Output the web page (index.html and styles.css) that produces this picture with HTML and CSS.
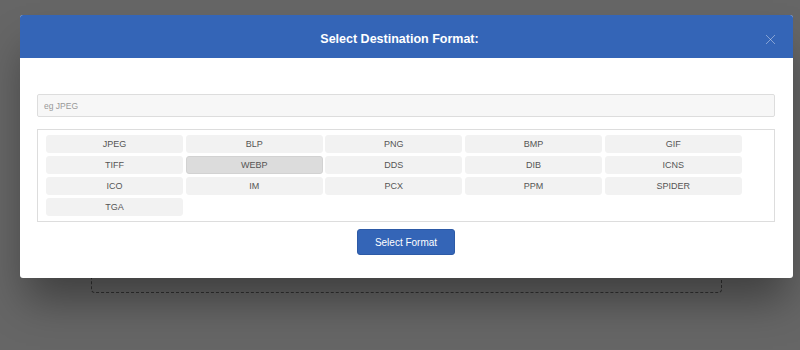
FILE: index.html
```html
<!DOCTYPE html>
<html lang="en">
<head>
    <meta charset="UTF-8">
    <title>Select Destination Format</title>
    <link rel="stylesheet" href="styles.css">
</head>
<body>
<div class="page">
    <div class="dropZone"></div>
</div>

<div class="modal">
    <header class="modalHead">
        <span class="modalTitle">Select Destination Format:</span>
        <button class="btnClose" title="Close">
            <svg width="11" height="11" viewBox="0 0 11 11"><path d="M1 1L10 10M10 1L1 10" stroke="currentColor" stroke-width="1" fill="none"/></svg>
        </button>
    </header>
    <div class="modalBody">
        <input type="text" id="formatSearch" placeholder="eg JPEG">
        <div class="formatList">
            <button class="fmt">JPEG</button>
            <button class="fmt">BLP</button>
            <button class="fmt">PNG</button>
            <button class="fmt">BMP</button>
            <button class="fmt">GIF</button>
            <button class="fmt">TIFF</button>
            <button class="fmt active">WEBP</button>
            <button class="fmt">DDS</button>
            <button class="fmt">DIB</button>
            <button class="fmt">ICNS</button>
            <button class="fmt">ICO</button>
            <button class="fmt">IM</button>
            <button class="fmt">PCX</button>
            <button class="fmt">PPM</button>
            <button class="fmt">SPIDER</button>
            <button class="fmt">TGA</button>
        </div>
        <div class="modalFoot">
            <button id="btnSelect">Select Format</button>
        </div>
    </div>
</div>
</body>
</html>
```

FILE: styles.css
```css
body{
    margin: 0;
    background-color: #666;
    font-family: "Liberation Sans", Arial, sans-serif;
}
.page{
    height: 350px;
    overflow: hidden;
}
.dropZone{
    width: 629px;
    height: 110px;
    margin: 181px 0 0 91px;
    border: 1px dashed #333;
    border-radius: 4px;
}
/*弹窗*/
.modal{
    position: absolute;
    left: 20px;
    top: 15px;
    width: 773px;
    height: 263px;
    background-color: #fff;
    border-radius: 3px;
    overflow: hidden;
    box-shadow: 0 28px 40px -6px rgba(0, 0, 0, .38);
}
.modalHead{
    box-sizing: border-box;
    height: 43px;
    background: #3465b7;
    display: flex;
    align-items: center;
    justify-content: center;
    padding: 5px 29px 0 15px;
    position: relative;
}
.modalTitle{
    color: #fff;
    font-weight: bold;
    font-size: 12.5px;
}
.btnClose{
    position: absolute;
    right: 17px;
    top: 19px;
    padding: 0;
    border: none;
    background: none;
    color: rgba(255, 255, 255, .4);
    line-height: 0;
}
.modalBody{
    padding: 36px 18px 0 17px;
}
/*搜索框*/
#formatSearch{
    display: block;
    box-sizing: border-box;
    width: 100%;
    height: 23px;
    margin: 0;
    padding: 0 6px;
    border: 1px solid #ddd;
    border-radius: 2px;
    background-color: #f7f7f7;
    font-family: inherit;
    font-size: 8.5px;
    outline: none;
}
#formatSearch::placeholder{
    color: #999;
}
/*格式列表*/
.formatList{
    margin-top: 12px;
    height: 93px;
    box-sizing: border-box;
    border: 1px solid #ddd;
    padding: 5px 8px;
    display: grid;
    grid-template-columns: repeat(5, 137px);
    grid-auto-rows: 18px;
    gap: 3px 2.7px;
    align-content: start;
}
.fmt{
    margin: 0;
    padding: 0;
    border: 1px solid #f2f2f2;
    border-radius: 3px;
    background-color: #f2f2f2;
    color: #555;
    font-family: inherit;
    font-size: 9px;
}
.fmt.active{
    background-color: #dcdcdc;
    border-color: #d2d2d2;
}
.modalFoot{
    display: flex;
    justify-content: center;
    margin-top: 7px;
}
#btnSelect{
    width: 98px;
    height: 26px;
    border: 1px solid #2d5aa6;
    border-radius: 3px;
    background-color: #3465b7;
    color: #fff;
    font-family: inherit;
    font-size: 10px;
}
```
